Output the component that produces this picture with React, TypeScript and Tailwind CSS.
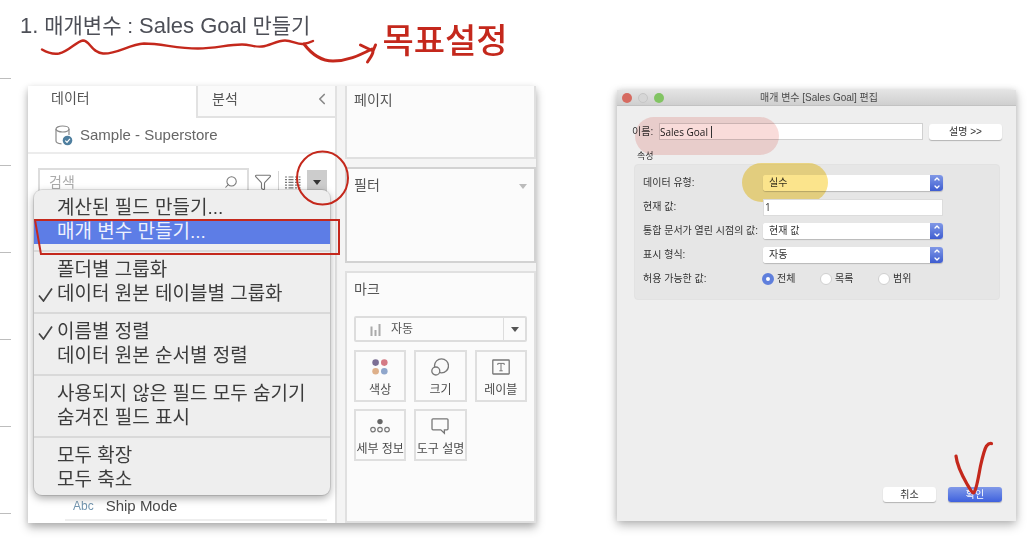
import React from 'react';
import { ChevronDown, ChevronLeft, ChevronUp, Funnel, Search } from 'lucide-react';

const INK = '#c4281c';

const MENU_GROUPS: { label: string; checked?: boolean; active?: boolean }[][] = [
  [{ label: '계산된 필드 만들기...' }, { label: '매개 변수 만들기...', active: true }],
  [{ label: '폴더별 그룹화' }, { label: '데이터 원본 테이블별 그룹화', checked: true }],
  [{ label: '이름별 정렬', checked: true }, { label: '데이터 원본 순서별 정렬' }],
  [{ label: '사용되지 않은 필드 모두 숨기기' }, { label: '숨겨진 필드 표시' }],
  [{ label: '모두 확장' }, { label: '모두 축소' }],
];

const DatabaseIcon = () => (
  <svg width="18" height="21" viewBox="0 0 18 21" fill="none" stroke="#8a8a8a" strokeWidth="1.2">
    <ellipse cx="7.5" cy="4" rx="6.5" ry="3" />
    <path d="M1 4v12c0 1.6 2.4 2.6 5.5 2.8M14 4v6" />
    <circle cx="12.5" cy="15.5" r="4.8" fill="#4f7f9f" stroke="none" />
    <path d="m10.3 15.6 1.7 1.7 2.9-3.4" stroke="#fff" />
  </svg>
);

const ListIcon = () => (
  <svg width="16" height="13" viewBox="0 0 16 13" stroke="#777" strokeWidth="1.2">
    {[1, 3.7, 6.4, 9.1, 11.8].map(y => (
      <path key={y} d={`M0 ${y}h2M3.5 ${y}h5M10 ${y}h2M13.5 ${y}h2`} />
    ))}
  </svg>
);

const ColorIcon = () => (
  <svg width="18" height="18" viewBox="0 0 18 18">
    <circle cx="4.6" cy="4.6" r="3.3" fill="#7c6f94" />
    <circle cx="13.3" cy="4.6" r="3.3" fill="#d47a84" />
    <circle cx="4.6" cy="13.3" r="3.3" fill="#deb08a" />
    <circle cx="13.3" cy="13.3" r="3.3" fill="#8fa6cb" />
  </svg>
);

const SizeIcon = () => (
  <svg width="18" height="18" viewBox="0 0 18 18" fill="#fafafa" stroke="#777" strokeWidth="1.3">
    <circle cx="10.5" cy="7.8" r="7" />
    <circle cx="4.8" cy="13" r="4" />
  </svg>
);

const LabelIcon = () => (
  <svg width="18" height="18" viewBox="0 0 18 18" fill="none" stroke="#777" strokeWidth="1.3">
    <rect x="0.8" y="2" width="16.4" height="14" rx="0.5" />
    <path d="M5.8 7V5.4h6.4V7M9 5.4v7.4M7.3 12.8h3.4" strokeWidth="1" />
  </svg>
);

const DetailIcon = () => (
  <svg width="20" height="18" viewBox="0 0 20 18" fill="none" stroke="#777" strokeWidth="1.2">
    <circle cx="10" cy="4.6" r="2.7" fill="#666" stroke="none" />
    <circle cx="3" cy="12.6" r="2.3" />
    <circle cx="10" cy="12.6" r="2.3" />
    <circle cx="17" cy="12.6" r="2.3" />
  </svg>
);

const TooltipIcon = () => (
  <svg width="18" height="18" viewBox="0 0 18 18" fill="none" stroke="#777" strokeWidth="1.3">
    <path d="M2 1.8h14c.6 0 1 .4 1 1v9c0 .6-.4 1-1 1h-2.6v3.4L9.8 12.8H2c-.6 0-1-.4-1-1v-9c0-.6.4-1 1-1Z" />
  </svg>
);

const Caret: React.FC<{ color: string }> = ({ color }) => (
  <svg width="8" height="5" viewBox="0 0 8 5" fill={color}>
    <path d="M0 0h8L4 5Z" />
  </svg>
);

const MARKS = [
  { label: '색상', icon: <ColorIcon /> },
  { label: '크기', icon: <SizeIcon /> },
  { label: '레이블', icon: <LabelIcon /> },
  { label: '세부 정보', icon: <DetailIcon /> },
  { label: '도구 설명', icon: <TooltipIcon /> },
];

const FieldMenu = () => (
  <div
    role="menu"
    className="absolute left-[6px] right-[5px] top-[104px] z-10 rounded-lg bg-[#eeeeee] pt-[6px] pb-[3px] shadow-[0_3px_9px_rgba(0,0,0,0.35),0_0_0_1px_rgba(0,0,0,0.1)]"
  >
    {MENU_GROUPS.map((group, i) => (
      <React.Fragment key={i}>
        {i > 0 && <div role="separator" className="my-[6px] h-[2px] bg-[#d9d9d9]" />}
        {group.map(item => (
          <button
            key={item.label}
            role="menuitem"
            className={
              item.active
                ? 'relative flex h-6 w-full items-center bg-[#5d7de6] pl-1 text-[19px] leading-6 whitespace-nowrap text-[#eef1fd]'
                : 'flex h-6 w-full items-center pl-1 text-[19px] leading-6 whitespace-nowrap text-[#3c3c3c]'
            }
          >
            <span className="w-[19px] shrink-0">
              {item.checked && (
                <svg width="15" height="15" viewBox="0 0 15 15" fill="none" stroke="#444" strokeWidth="1.7">
                  <path d="M1 8.5 5.5 14 14 1.5" />
                </svg>
              )}
            </span>
            {item.label}
            {item.active && (
              <svg
                className="pointer-events-none absolute -top-px left-0 h-9 w-[calc(100%+10px)]"
                viewBox="0 0 308 36"
                preserveAspectRatio="none"
                fill="none"
                stroke={INK}
                strokeWidth="2"
              >
                <path d="M1 1h306v34H7Z" vectorEffect="non-scaling-stroke" />
              </svg>
            )}
          </button>
        ))}
      </React.Fragment>
    ))}
  </div>
);

const DataPane = () => (
  <div className="relative flex flex-col border-r-2 border-[#e2e2e2] bg-white">
    <div className="flex h-8 text-[14px] leading-5 text-[#555555]">
      <button className="w-[168px] pb-2 pl-[23px] text-left">데이터</button>
      <button className="flex flex-1 items-center justify-between border-b-2 border-l-2 border-[#e2e2e2] bg-[#fafafa] pr-1 pb-1 pl-[14px]">
        분석
        <ChevronLeft size={18} strokeWidth={2.2} color="#888" />
      </button>
    </div>
    <div className="flex h-9 items-center gap-[7px] border-b-2 border-[#ececec] pl-[27px] text-[15px] text-[#666666]">
      <DatabaseIcon />
      Sample - Superstore
    </div>
    <div className="mt-[14px] flex items-start pr-2 pl-[10px]">
      <label className="flex h-7 min-w-0 flex-1 items-center border-2 border-[#dddddd] px-[9px]">
        <input
          aria-label="검색"
          placeholder="검색"
          className="w-full min-w-0 bg-transparent text-[14px] outline-none placeholder:text-[#aaaaaa]"
        />
        <Search size={14} strokeWidth={1.8} color="#777" className="shrink-0 -scale-x-100" />
      </label>
      <button aria-label="필드 필터" className="ml-[5px] flex h-7 items-center">
        <Funnel size={18} strokeWidth={1.5} color="#777" />
      </button>
      <span className="mx-[6px] mt-[3px] h-5 w-px bg-[#d5d5d5]" />
      <button aria-label="목록 보기" className="flex h-7 items-center">
        <ListIcon />
      </button>
      <button aria-label="메뉴" className="relative mt-[2px] ml-[6px] flex h-6 w-5 items-center justify-center bg-[#cccccc]">
        <Caret color="#333" />
        <svg className="pointer-events-none absolute -top-5 -left-[11px] z-20" width="54" height="56" viewBox="0 0 54 56" fill="none" stroke={INK} strokeWidth="2">
          <ellipse cx="26.5" cy="28" rx="25.5" ry="26.5" />
        </svg>
      </button>
    </div>
    <FieldMenu />
    <div className="mt-auto mr-2 mb-[2px] ml-[37px] flex h-7 items-center gap-3 border-b-2 border-[#eeeeee] pl-2 text-[15px] text-[#4a4a4a]">
      <span className="text-[12px] text-[#7396b0]">Abc</span>
      Ship Mode
    </div>
  </div>
);

const Shelves = () => (
  <div className="flex flex-col gap-2 text-[14px] leading-5 text-[#555555]">
    <section className="h-[73px] border-x-2 border-b-2 border-[#e0e0e0] bg-[#fbfbfb] px-[7px] pt-1">페이지</section>
    <section className="flex h-24 items-start justify-between border-2 border-[#d2d2d2] bg-[#fbfbfb] px-[7px] pt-[6px]">
      필터
      <span className="mt-[9px]">
        <Caret color="#bbb" />
      </span>
    </section>
    <section className="flex-1 border-2 border-[#e0e0e0] bg-[#fbfbfb] px-[7px] pt-[6px] pb-[60px]">
      <h2>마크</h2>
      <button className="mt-[17px] flex h-[26px] w-full items-center rounded-xs border-2 border-[#dddddd] pl-[14px] text-[12px]">
        <svg width="12" height="13" viewBox="0 0 12 13" fill="none" stroke="#aaa" strokeWidth="2">
          <path d="M1.500 3.500V13M5.500 7V13M9.500 1V13" />
        </svg>
        <span className="ml-[9px] flex-1 text-left">자동</span>
        <span className="flex h-full w-[22px] items-center justify-center border-l border-[#dddddd]">
          <Caret color="#555" />
        </span>
      </button>
      <div className="mt-2 grid grid-cols-3 gap-x-2 gap-y-[7px]">
        {MARKS.map(mark => (
          <button
            key={mark.label}
            className="flex h-[52px] flex-col items-center justify-between border-2 border-[#dfdfdf] pt-[6px] pb-px text-[12px] leading-[18px] whitespace-nowrap text-[#4a4a4a]"
          >
            {mark.icon}
            {mark.label}
          </button>
        ))}
      </div>
    </section>
  </div>
);

const FormRow: React.FC<{ label: string; id: string; children: React.ReactNode }> = ({ label, id, children }) => (
  <div className="relative flex h-6 items-center">
    <label htmlFor={id} className="w-[120px] shrink-0 whitespace-nowrap">
      {label}
    </label>
    {children}
  </div>
);

const SelectBox: React.FC<{ id: string; value: string }> = ({ id, value }) => (
  <div className="flex h-4 w-[180px] overflow-hidden rounded-[3px] bg-white shadow-[0_1px_1px_rgba(0,0,0,0.2)]">
    <select id={id} className="min-w-0 flex-1 appearance-none bg-white pl-[6px] leading-4 outline-none">
      <option>{value}</option>
    </select>
    <span className="flex w-[13px] flex-col items-center justify-center bg-linear-to-b from-[#8198e6] to-[#3f5cd0]">
      <ChevronUp size={8} strokeWidth={4} color="#fff" />
      <ChevronDown size={8} strokeWidth={4} color="#fff" />
    </span>
  </div>
);

const ParameterDialog = () => (
  <section className="mt-1 mb-[2px] flex flex-col bg-[#eeeeee] text-[10px] leading-4 text-[#333333] shadow-[0_4px_10px_rgba(0,0,0,0.28),0_0_6px_rgba(0,0,0,0.1)]">
    <header className="grid h-4 grid-cols-[1fr_auto_1fr] items-center border-b border-[#c2c2c2] bg-linear-to-b from-[#e4e4e4] to-[#cfcfcf] pl-[5px] text-[#4a4a4a]">
      <div className="flex gap-[6px]">
        <span className="size-[10px] rounded-full bg-[#d66a60]" />
        <span className="size-[10px] rounded-full border border-[#c6c6c6] bg-[#d6d6d6]" />
        <span className="size-[10px] rounded-full bg-[#82c463]" />
      </div>
      <h2>매개 변수 [Sales Goal] 편집</h2>
    </header>

    <div className="relative mt-[17px] flex h-[17px] items-center pr-[14px] pl-[15px]">
      <label htmlFor="name" className="w-[27px] shrink-0">
        이름:
      </label>
      <input
        id="name"
        defaultValue="Sales Goal"
        className="h-[17px] min-w-0 flex-1 border border-[#d0d0d0] bg-white font-['Open_Sans','Noto_Sans_CJK_KR',sans-serif] text-[10px] font-medium text-[#222222] outline-none"
      />
      <button className="ml-[6px] h-4 w-[73px] rounded-[3px] bg-white shadow-[0_1px_1px_rgba(0,0,0,0.25)]">설명 &gt;&gt;</button>
      <span className="pointer-events-none absolute -top-[6px] left-[18px] h-[38px] w-[144px] rounded-full bg-[#f9dcda] mix-blend-multiply" />
      <span className="pointer-events-none absolute top-[3px] left-[94px] h-3 w-px bg-[#333333]" />
    </div>

    <h3 className="mt-2 pl-5 text-[9px]">속성</h3>
    <div className="mr-4 ml-[17px] rounded-[4px] border border-[#e2e2e2] bg-[#e6e6e6] px-2 pt-[6px] pb-2">
      <FormRow label="데이터 유형:" id="type">
        <SelectBox id="type" value="실수" />
        <span className="pointer-events-none absolute -top-2 left-[99px] h-[39px] w-[86px] rounded-full bg-[#fbe48c] mix-blend-multiply" />
      </FormRow>
      <FormRow label="현재 값:" id="current">
        <input
          id="current"
          defaultValue="1"
          className="h-[17px] w-[180px] border border-[#dcdcdc] bg-white pl-px font-['Open_Sans',sans-serif] text-[10px] outline-none"
        />
      </FormRow>
      <FormRow label="통합 문서가 열린 시점의 값:" id="open">
        <SelectBox id="open" value="현재 값" />
      </FormRow>
      <FormRow label="표시 형식:" id="format">
        <SelectBox id="format" value="자동" />
      </FormRow>
      <div role="radiogroup" aria-labelledby="allowed" className="flex h-6 items-center">
        <span id="allowed" className="w-[119px] shrink-0">
          허용 가능한 값:
        </span>
        {['전체', '목록', '범위'].map((option, i) => (
          <label key={option} className="flex w-[58px] items-center gap-[3px]">
            <input
              type="radio"
              name="allowed"
              defaultChecked={i === 0}
              className="size-3 appearance-none rounded-full border border-[#d0d0d0] bg-white checked:border-4 checked:border-[#5f7fdc]"
            />
            {option}
          </label>
        ))}
      </div>
    </div>

    <footer className="mt-auto flex justify-end gap-3 pt-10 pr-[14px] pb-[19px]">
      <button className="h-[15px] w-[53px] rounded-[3px] bg-white leading-[15px] shadow-[0_1px_1px_rgba(0,0,0,0.25)]">취소</button>
      <button className="relative h-[15px] w-[54px] rounded-[3px] bg-linear-to-b from-[#8199e8] to-[#3f60dd] leading-[15px] text-white shadow-[0_1px_1px_rgba(0,0,0,0.25)]">
        확인
        <svg
          className="pointer-events-none absolute bottom-[5px] left-[5px]"
          width="42"
          height="58"
          viewBox="0 0 42 58"
          fill="none"
          stroke={INK}
          strokeWidth="3.200"
          strokeLinecap="round"
          strokeLinejoin="round"
        >
          <path d="M3 17c1 9 7 21 11 28 3 5 5 9 6.500 9 3-2 5-17 7-27 2-9 4-17 6-20 1.500-2 3-3 5-2.500" />
        </svg>
      </button>
    </footer>
  </section>
);

const Heading = () => (
  <header className="relative flex h-[86px] items-start gap-[72px] pt-3 pl-[9px]">
    <h1 className="text-[21px] leading-7 whitespace-nowrap text-[#4d4f57]">
      <span className="text-[22px]">1.</span> 매개변수 : <span className="text-[22px]">Sales Goal</span> 만들기
    </h1>
    <svg
      className="pointer-events-none absolute top-9 left-[29px]"
      width="340"
      height="30"
      viewBox="40 36 340 30"
      fill="none"
      stroke={INK}
      strokeWidth="2.400"
      strokeLinecap="round"
      strokeLinejoin="round"
    >
      <path d="M42 49.500c5 3 11 5 17 4 10-2 17-12 24-13 7 0 8 12 20 13 13 1 26-9 41-10 18 0 32 5 54 5 18 0 29-4 44-4 8 0 13 3 20 2 8-1 15-6 23-6 7 0 12 4 18 3.500 4-.5 7-1.500 10-3" />
      <path d="M304 44c6 8 15 17 29 17 14 0 25-5 39-12M360.500 45l12.500 6 2.500-6M373 51c0 4-3 7-5.500 11" strokeWidth="3" />
    </svg>
    <span className="text-[34px] leading-[58px] font-medium whitespace-nowrap text-[#c4281c]">목표설정</span>
  </header>
);

export default function App() {
  return (
    <div className="flex min-h-screen bg-white pb-4 font-['Liberation_Sans','Noto_Sans_CJK_KR',sans-serif]">
      <div className="flex w-[11px] shrink-0 flex-col gap-[86px] pt-[78px]">
        {[0, 1, 2, 3, 4, 5].map(n => (
          <span key={n} className="h-px bg-[#bdbdbd]" />
        ))}
      </div>
      <main className="min-w-0 flex-1">
        <Heading />
        <div className="grid grid-cols-[508fr_399fr] gap-[81px] pr-3 pl-[17px]">
          <section className="grid grid-cols-[309fr_191fr] gap-2 bg-[#f4f4f4] shadow-[0_5px_9px_rgba(0,0,0,0.25),0_2px_6px_rgba(0,0,0,0.12)]">
            <DataPane />
            <Shelves />
          </section>
          <ParameterDialog />
        </div>
      </main>
    </div>
  );
}
